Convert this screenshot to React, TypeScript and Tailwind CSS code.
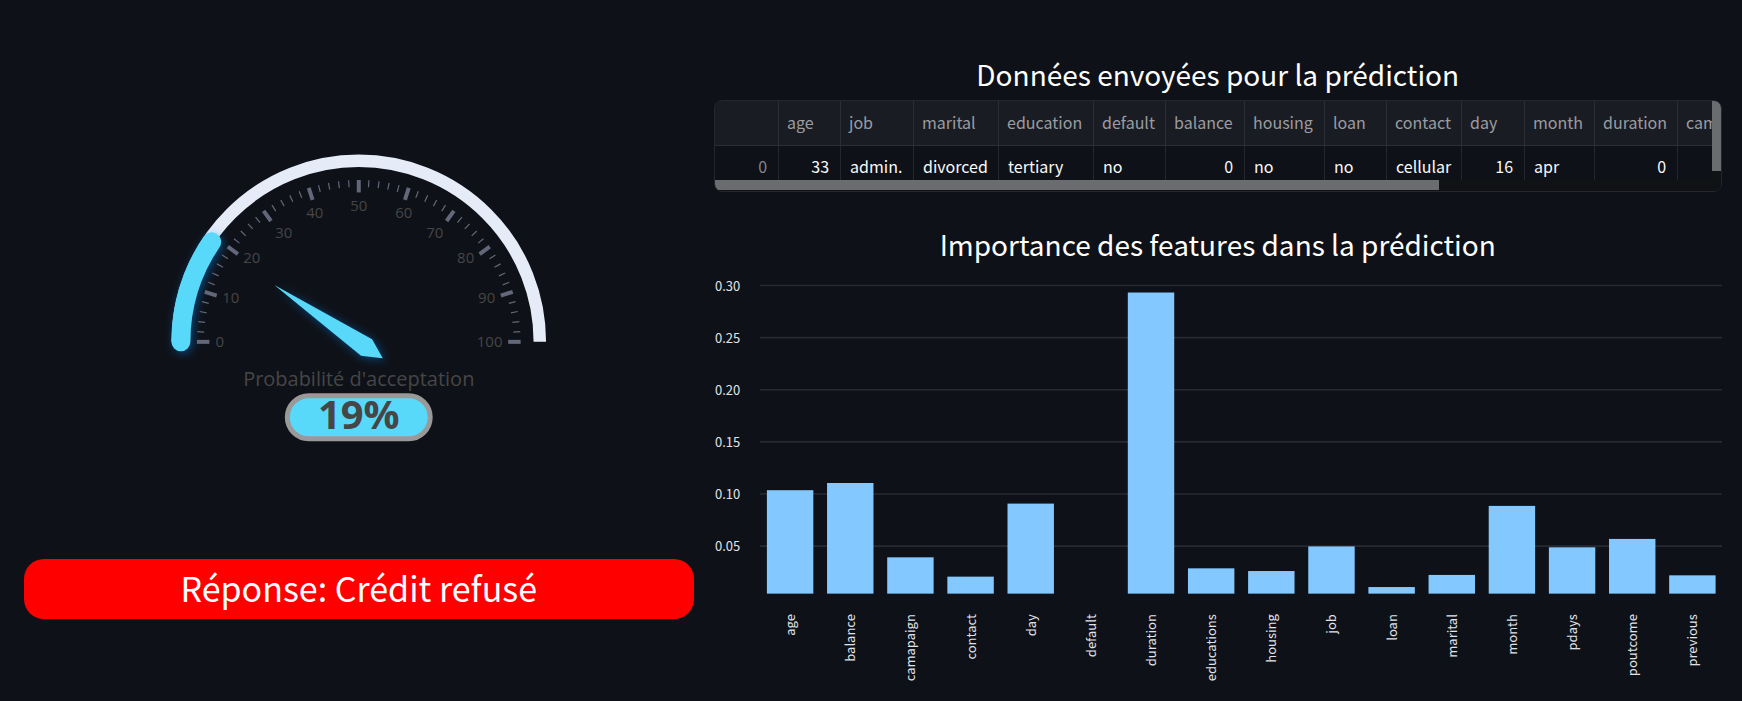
const SANS = "font-['Noto_Sans_CJK_SC',sans-serif]";

const ACCENT = "#58d9f9";
const GAUGE_VALUE = 19;

function polar(radius: number, percent: number) {
  const angle = Math.PI * (1 - percent / 100);
  return { x: radius * Math.cos(angle), y: -radius * Math.sin(angle) };
}

function arc(radius: number, from: number, to: number) {
  const a = polar(radius, from);
  const b = polar(radius, to);
  return `M${a.x} ${a.y}A${radius} ${radius} 0 0 1 ${b.x} ${b.y}`;
}

const gaugeLabels = [
  { value: 0, x: -139, y: 0 },
  { value: 10, x: -128, y: -44 },
  { value: 20, x: -107, y: -84 },
  { value: 30, x: -75, y: -109 },
  { value: 40, x: -44, y: -129 },
  { value: 50, x: 0, y: -136 },
  { value: 60, x: 45, y: -129 },
  { value: 70, x: 76, y: -109 },
  { value: 80, x: 107, y: -84 },
  { value: 90, x: 128, y: -44 },
  { value: 100, x: 131, y: 0 },
];

function Gauge() {
  const ticks = Array.from({ length: 51 }, (_, i) => i * 2);
  return (
    <svg
      viewBox="-335 -202 670 399"
      className="w-full font-['Open_Sans',sans-serif]"
      role="img"
      aria-label="Probabilité d'acceptation"
    >
      <defs>
        <filter id="glow" x="-50%" y="-50%" width="200%" height="200%">
          <feDropShadow dx="2" dy="2" stdDeviation="5" floodColor="#008aff" floodOpacity="0.45" />
        </filter>
      </defs>
      <path d={arc(181.2, 0, 100)} fill="none" stroke="#e6ebf8" strokeWidth="12.5" />
      <path
        d={arc(178, 0, GAUGE_VALUE)}
        fill="none"
        stroke={ACCENT}
        strokeWidth="19"
        strokeLinecap="round"
        filter="url(#glow)"
      />
      {ticks.map((t) => {
        const major = t % 10 === 0;
        const a = polar(162, t);
        const b = polar(major ? 149.5 : 155, t);
        return (
          <line
            key={t}
            x1={a.x}
            y1={a.y}
            x2={b.x}
            y2={b.y}
            stroke="#63677a"
            strokeWidth={major ? 4 : 1.2}
          />
        );
      })}
      {gaugeLabels.map((l) => (
        <text key={l.value} x={l.x} y={l.y + 5} textAnchor="middle" fontSize="15" fill="#464646">
          {l.value}
        </text>
      ))}
      <path d="M-84.5 -57L13.3 -2.7L24 16.5L2.3 14Z" fill={ACCENT} filter="url(#glow)" />
      <text x="0" y="44" textAnchor="middle" fontSize="20" fill="#464646">
        Probabilité d'acceptation
      </text>
      <rect x="-71.5" y="54" width="143" height="43" rx="21.5" fill={ACCENT} stroke="#999" strokeWidth="5" />
      <text x="0" y="87" textAnchor="middle" fontSize="40" fontWeight="700" fill="#464646">
        {`${GAUGE_VALUE}%`}
      </text>
    </svg>
  );
}

type Column = { name: string; value: string; width: string; numeric?: boolean };

const columns: Column[] = [
  { name: "age", value: "33", width: "w-[62px]", numeric: true },
  { name: "job", value: "admin.", width: "w-[73px]" },
  { name: "marital", value: "divorced", width: "w-[85px]" },
  { name: "education", value: "tertiary", width: "w-[95px]" },
  { name: "default", value: "no", width: "w-[72px]" },
  { name: "balance", value: "0", width: "w-[79px]", numeric: true },
  { name: "housing", value: "no", width: "w-[80px]" },
  { name: "loan", value: "no", width: "w-[62px]" },
  { name: "contact", value: "cellular", width: "w-[75px]" },
  { name: "day", value: "16", width: "w-[63px]", numeric: true },
  { name: "month", value: "apr", width: "w-[70px]" },
  { name: "duration", value: "0", width: "w-[83px]", numeric: true },
  { name: "campaign", value: "", width: "w-[96px]" },
];

function DataTable() {
  return (
    <div className="relative overflow-hidden rounded-lg border border-[#25272d]">
      <div className="mr-[9px] h-[79px] overflow-hidden">
        <table className="w-[1059px] table-fixed border-collapse text-base leading-5">
          <thead>
            <tr className="h-11 border-b border-[#2c2e36] bg-[#1a1c24] text-left text-[#9b9ca0]">
              <th className="w-16 border-r border-[#2c2e36]" aria-label="index" />
              {columns.map((c) => (
                <th key={c.name} className={`${c.width} border-r border-[#2c2e36] pb-0.5 pl-2 font-normal`}>
                  {c.name}
                </th>
              ))}
            </tr>
          </thead>
          <tbody>
            <tr className="h-[42px] text-[#fafafa]">
              <th className="border-r border-[#25272d] pr-[11px] text-right font-normal text-[#83858a]">0</th>
              {columns.map((c) => (
                <td
                  key={c.name}
                  className={
                    c.numeric
                      ? "border-r border-[#25272d] pr-[11px] text-right"
                      : "border-r border-[#25272d] pl-[9px]"
                  }
                >
                  {c.value}
                </td>
              ))}
            </tr>
          </tbody>
        </table>
      </div>
      <div className="h-[11px] bg-[#111216]">
        <div className="h-[10px] w-[72%] bg-[#6b6c70]" />
      </div>
      <div className="absolute top-0 right-0 h-full w-[9px] bg-[#111216]">
        <div className="h-[70px] bg-[#6b6c70]" />
      </div>
    </div>
  );
}

const features = [
  { name: "age", height: 103.4 },
  { name: "balance", height: 110.6 },
  { name: "camapaign", height: 36.3 },
  { name: "contact", height: 17 },
  { name: "day", height: 90 },
  { name: "default", height: 0 },
  { name: "duration", height: 301 },
  { name: "educations", height: 25.3 },
  { name: "housing", height: 22.6 },
  { name: "job", height: 47.2 },
  { name: "loan", height: 6.6 },
  { name: "marital", height: 18.7 },
  { name: "month", height: 87.7 },
  { name: "pdays", height: 46.3 },
  { name: "poutcome", height: 54.7 },
  { name: "previous", height: 18.3 },
];

const axis = ["0.30", "0.25", "0.20", "0.15", "0.10", "0.05"];

function FeatureChart() {
  const left = 46;
  const right = 1008;
  const base = 323.5;
  const step = (right - left) / features.length;
  return (
    <svg viewBox="0 0 1008 431" className="w-full" role="img" aria-label="Importance des features">
      {axis.map((label, i) => {
        const y = 15.5 + i * 52.1;
        return (
          <g key={label}>
            <line x1={left} x2={right} y1={y} y2={y} stroke="#282a33" strokeWidth="1.6" />
            <text x="1" y={y + 5} fontSize="13" fill="#e1e3ea">
              {label}
            </text>
          </g>
        );
      })}
      {features.map((f, i) => {
        const center = left + step * (i + 0.5);
        return (
          <g key={f.name}>
            <rect x={center - 23.2} y={base - f.height} width="46.4" height={f.height} fill="#83c9ff" />
            <text
              transform={`translate(${center + 5} 344) rotate(-90)`}
              textAnchor="end"
              fontSize="13"
              fill="#e1e3ea"
            >
              {f.name}
            </text>
          </g>
        );
      })}
    </svg>
  );
}

export default function App() {
  return (
    <main
      className={`grid min-h-screen grid-cols-[minmax(0,399fr)_minmax(0,601fr)] gap-5 bg-[#0e1117] pr-5 pl-6 text-white ${SANS}`}
    >
      <section className="pt-[140px]">
        <Gauge />
        <p className="mt-5 rounded-[20px] bg-[#ff0000] pb-0.5 text-center text-[34px] leading-[58px]">
          Réponse: Crédit refusé
        </p>
      </section>
      <section>
        <h2 className="mt-[54px] mb-1.5 text-center text-[28px] leading-10">Données envoyées pour la prédiction</h2>
        <DataTable />
        <h2 className="mt-8 mb-1.5 text-center text-[28px] leading-10">
          Importance des features dans la prédiction
        </h2>
        <FeatureChart />
      </section>
    </main>
  );
}
